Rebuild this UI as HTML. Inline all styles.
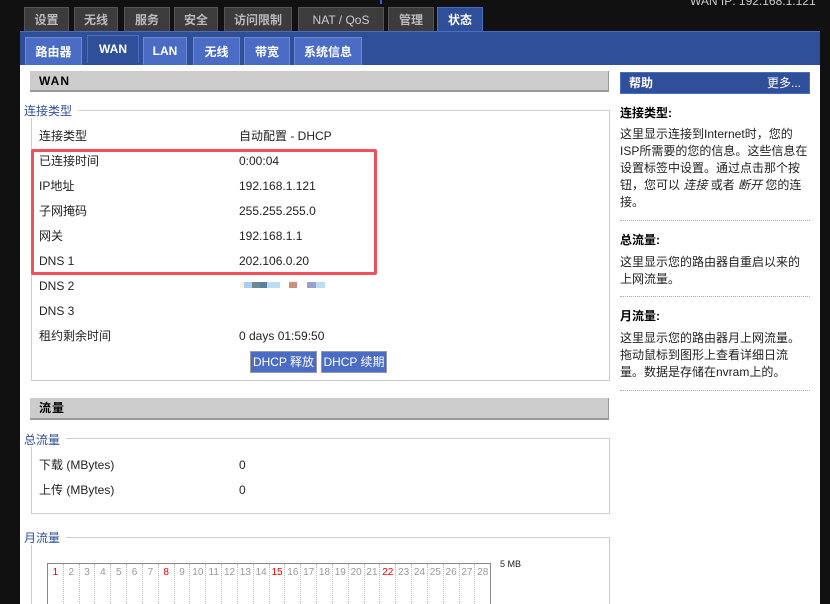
<!DOCTYPE html>
<html><head><meta charset="utf-8"><style>
*{margin:0;padding:0;box-sizing:border-box}
html,body{width:830px;height:604px;overflow:hidden}
body{background:#111;font-family:"Liberation Sans","Noto Sans CJK SC",sans-serif;font-size:12px;color:#000;position:relative}
.a{position:absolute}
.tab{position:absolute;top:7px;height:25px;background:#3c3c3c;border:1px solid #555;border-bottom:none;color:#bbb;font-weight:bold;font-size:12px;text-align:center;line-height:24px}
.sub{position:absolute;top:37px;height:28px;background:#4a6cc4;border:1px solid #6a88d4;border-bottom:none;color:#fff;font-weight:bold;font-size:12px;text-align:center;line-height:28px}
.hdr{position:absolute;background:#ccc;border-bottom:2px solid #999;border-right:1px solid #999;font-weight:bold;font-size:12px;padding-left:9px;line-height:20px;letter-spacing:1px}
.leg{position:absolute;color:#2f4f99;font-size:12px;left:24px;background:#fff;padding-right:6px;line-height:14px}
.box{position:absolute;border:1px solid #ccc;left:31px;width:579px}
.r{position:absolute;font-size:12px;color:#222;line-height:14px}
.btn{position:absolute;top:351px;height:22px;background:#4a6cc4;border:1px solid #999;color:#fff;font-size:12px;line-height:20px;text-align:center}
.h{position:absolute;left:620px;font-size:12px;color:#222;line-height:17px;width:190px}
.dot{position:absolute;left:620px;width:190px;border-top:1px dotted #aaa}
.ch span{flex:1;text-align:center;border-right:1px dotted #bbb}
</style></head><body>
<div class="a" style="left:690px;top:-6px;color:#ccc;font-size:12px">WAN IP: 192.168.1.121</div>
<div class="a" style="left:380px;top:0;width:2px;height:4px;background:#2f5fd0"></div>
<div class="tab" style="left:24px;width:45px">设置</div>
<div class="tab" style="left:74px;width:44px">无线</div>
<div class="tab" style="left:124px;width:46px">服务</div>
<div class="tab" style="left:174px;width:44px">安全</div>
<div class="tab" style="left:224px;width:68px">访问限制</div>
<div class="tab" style="left:298px;width:86px;font-weight:normal;color:#ccc">NAT / QoS</div>
<div class="tab" style="left:388px;width:46px">管理</div>
<div class="tab" style="left:437px;width:46px;background:#2f4f99;border-color:#4a6cc4;color:#fff">状态</div>
<div class="a" style="left:20px;top:31px;width:800px;height:35px;background:#2f4f99;border-top:1px solid #4a6cc4"></div>
<div class="sub" style="left:25px;width:57px">路由器</div>
<div class="sub" style="left:87px;width:52px;background:#2f4f99;border-color:#4a6cc4;top:35px;line-height:26px">WAN</div>
<div class="sub" style="left:143px;width:44px;line-height:26px">LAN</div>
<div class="sub" style="left:193px;width:47px">无线</div>
<div class="sub" style="left:244px;width:46px">带宽</div>
<div class="sub" style="left:294px;width:68px">系统信息</div>
<div class="a" style="left:20px;top:65px;width:800px;height:539px;background:#fff"></div>

<div class="hdr" style="left:30px;top:71px;width:579px;height:21px">WAN</div>
<div class="box" style="top:110px;height:271px"></div>
<div class="leg" style="top:104px">连接类型</div>
<div class="r" style="left:39px;top:129px">连接类型</div><div class="r" style="left:239px;top:129px">自动配置 - DHCP</div>
<div class="r" style="left:39px;top:154px">已连接时间</div><div class="r" style="left:239px;top:154px">0:00:04</div>
<div class="r" style="left:39px;top:179px">IP地址</div><div class="r" style="left:239px;top:179px">192.168.1.121</div>
<div class="r" style="left:39px;top:204px">子网掩码</div><div class="r" style="left:239px;top:204px">255.255.255.0</div>
<div class="r" style="left:39px;top:229px">网关</div><div class="r" style="left:239px;top:229px">192.168.1.1</div>
<div class="r" style="left:39px;top:254px">DNS 1</div><div class="r" style="left:239px;top:254px">202.106.0.20</div>
<div class="r" style="left:39px;top:279px">DNS 2</div>
<div class="a" style="left:240px;top:282px;width:40px;height:6px;background:linear-gradient(90deg,#fdf3dc 0 4px,#a8cfee 4px 12px,#6a8a90 12px 20px,#5a80a0 20px 27px,#bcdcf4 27px)"></div>
<div class="a" style="left:289px;top:282px;width:8px;height:6px;background:#d09080"></div>
<div class="a" style="left:307px;top:282px;width:18px;height:6px;background:linear-gradient(90deg,#9aa0cc 0 9px,#bcdcf4 9px)"></div>
<div class="r" style="left:39px;top:304px">DNS 3</div>
<div class="r" style="left:39px;top:329px">租约剩余时间</div><div class="r" style="left:239px;top:329px">0 days 01:59:50</div>
<div class="btn" style="left:250px;width:67px">DHCP 释放</div>
<div class="btn" style="left:321px;width:66px">DHCP 续期</div>
<div class="a" style="left:31px;top:149px;width:346px;height:126px;border:3px solid #f0505a;border-radius:2px"></div>

<div class="hdr" style="left:30px;top:398px;width:579px;height:22px">流量</div>
<div class="box" style="top:438px;height:76px"></div>
<div class="leg" style="top:433px">总流量</div>
<div class="r" style="left:39px;top:458px">下载 (MBytes)</div><div class="r" style="left:239px;top:458px">0</div>
<div class="r" style="left:39px;top:483px">上传 (MBytes)</div><div class="r" style="left:239px;top:483px">0</div>
<div class="box" style="top:537px;height:80px"></div>
<div class="leg" style="top:531px">月流量</div>
<div class="a" style="left:47px;top:563px;width:444px;height:41px;border:1px solid #888;border-bottom:none">
<div class="ch" style="display:flex;width:100%;height:100%;font-size:10px;color:#999;line-height:18px">
<span style="color:#e00">1</span><span>2</span><span>3</span><span>4</span><span>5</span><span>6</span><span>7</span><span style="color:#e00">8</span><span>9</span><span>10</span><span>11</span><span>12</span><span>13</span><span>14</span><span style="color:#e00">15</span><span>16</span><span>17</span><span>18</span><span>19</span><span>20</span><span>21</span><span style="color:#e00">22</span><span>23</span><span>24</span><span>25</span><span>26</span><span>27</span><span style="border-right:none">28</span>
</div></div>
<div class="r" style="left:500px;top:557px;font-size:9px">5 MB</div>

<div class="a" style="left:620px;top:72px;width:190px;height:22px;background:#2f4f99;border:1px solid #4a6cc4;color:#fff;font-weight:bold;line-height:20px;padding:0 8px"><span>帮助</span><span style="float:right;font-weight:normal">更多...</span></div>
<div class="h" style="top:105px;font-weight:bold;color:#000">连接类型:</div>
<div class="h" style="top:126px">这里显示连接到Internet时，您的ISP所需要的您的信息。这些信息在设置标签中设置。通过点击那个按钮，您可以 <i>连接</i> 或者 <i>断开</i> 您的连接。</div>
<div class="dot" style="top:220px"></div>
<div class="h" style="top:232px;font-weight:bold;color:#000">总流量:</div>
<div class="h" style="top:254px">这里显示您的路由器自重启以来的上网流量。</div>
<div class="dot" style="top:296px"></div>
<div class="h" style="top:308px;font-weight:bold;color:#000">月流量:</div>
<div class="h" style="top:330px">这里显示您的路由器月上网流量。拖动鼠标到图形上查看详细日流量。数据是存储在nvram上的。</div>
<div class="dot" style="top:390px"></div>
</body></html>
